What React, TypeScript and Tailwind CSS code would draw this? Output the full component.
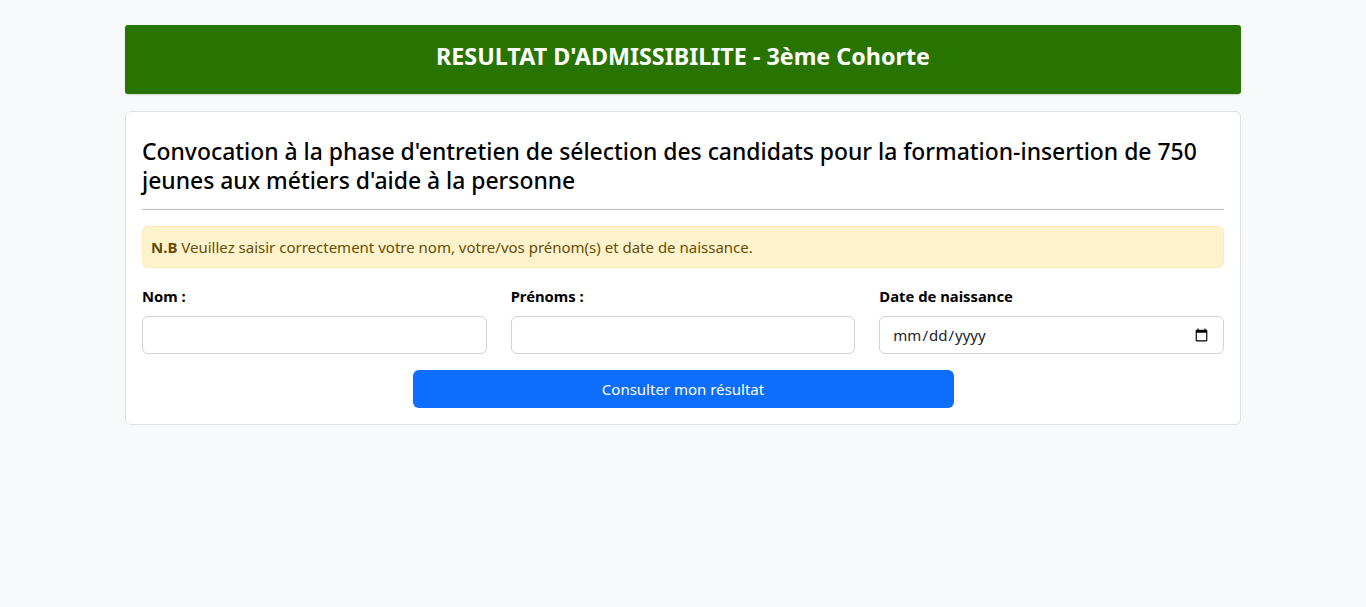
export default function App() {
  return (
    <div className="min-h-screen bg-[#f8f9fa] font-['Noto_Sans',sans-serif] text-[#212529]">
      <div className="mx-auto w-[1140px] px-3 pt-[25px]">
        <div className="flex h-[69px] items-center justify-center rounded-[3px] bg-[#277400] pb-[6px] shadow-[0_1px_2px_rgba(0,0,0,0.15)]">
          <h1 className="text-[23.3px] font-bold text-white">RESULTAT D'ADMISSIBILITE - 3ème Cohorte</h1>
        </div>

        <div className="mt-[17px] rounded-[6px] border border-[#dee2e6] bg-white p-4">
          <h2 className="mt-[9px] text-[22.9px] font-medium leading-[29px] text-black">
            Convocation à la phase d'entretien de sélection des candidats pour la formation-insertion de 750 jeunes aux
            métiers d'aide à la personne
          </h2>
          <hr className="mt-[14px] border-t border-[#bdbdbd]" />

          <div className="mt-4 rounded-[6px] border border-[#ffecb5] bg-[#fff3cd] px-2 py-2 text-[15px] leading-6 text-[#664d03]">
            <b>N.B</b> Veuillez saisir correctement votre nom, votre/vos prénom(s) et date de naissance.
          </div>

          <div className="mt-4 grid grid-cols-3 gap-6">
            <div>
              <label className="block text-[14.8px] font-bold leading-6 text-black">Nom :</label>
              <input
                type="text"
                className="mt-[8px] h-[38px] w-full rounded-[6px] border border-[#ced4da] px-3 text-[15px] outline-none"
              />
            </div>
            <div>
              <label className="block text-[14.8px] font-bold leading-6 text-black">Prénoms :</label>
              <input
                type="text"
                className="mt-[8px] h-[38px] w-full rounded-[6px] border border-[#ced4da] px-3 text-[15px] outline-none"
              />
            </div>
            <div>
              <label className="block text-[14.8px] font-bold leading-6 text-black">Date de naissance</label>
              <input
                type="date"
                className="mt-[8px] h-[38px] w-full rounded-[6px] border border-[#ced4da] px-3 text-[15px] text-[#212529] outline-none"
              />
            </div>
          </div>

          <div className="mt-4 flex justify-center">
            <button className="h-[38px] w-[541px] rounded-[6px] bg-[#0d6efd] text-[15px] text-white">
              Consulter mon résultat
            </button>
          </div>
        </div>
      </div>
    </div>
  );
}
